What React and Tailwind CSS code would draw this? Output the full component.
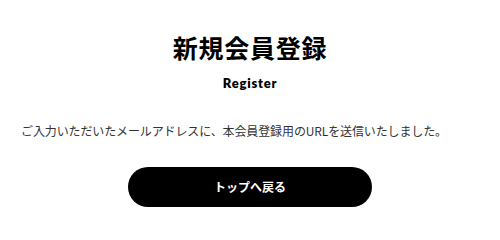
import React from 'react';

const App = () => {
  return (
    <div className="w-[500px] h-[230px] bg-white flex flex-col items-center pt-[28px] font-['Noto_Sans_CJK_JP','Noto_Sans',sans-serif]">
      <h1 className="text-[25px] leading-[39px] font-bold text-black tracking-[0.03em]">
        新規会員登録
      </h1>

      <p className="mt-[6px] text-[13px] leading-[20px] font-extrabold text-black tracking-[0.06em] font-['Lato','Noto_Sans',sans-serif]">
        Register
      </p>

      <p className="mt-[28px] self-stretch px-[21px] text-[12px] leading-[20px] text-[#333] tracking-[-0.01em]">
        ご入力いただいたメールアドレスに、本会員登録用のURLを送信いたしました。
      </p>

      <button className="mt-[26px] w-[244px] h-[40px] rounded-full bg-black text-white text-[12px] font-bold flex items-center justify-center">
        トップへ戻る
      </button>
    </div>
  );
};

export default App;
